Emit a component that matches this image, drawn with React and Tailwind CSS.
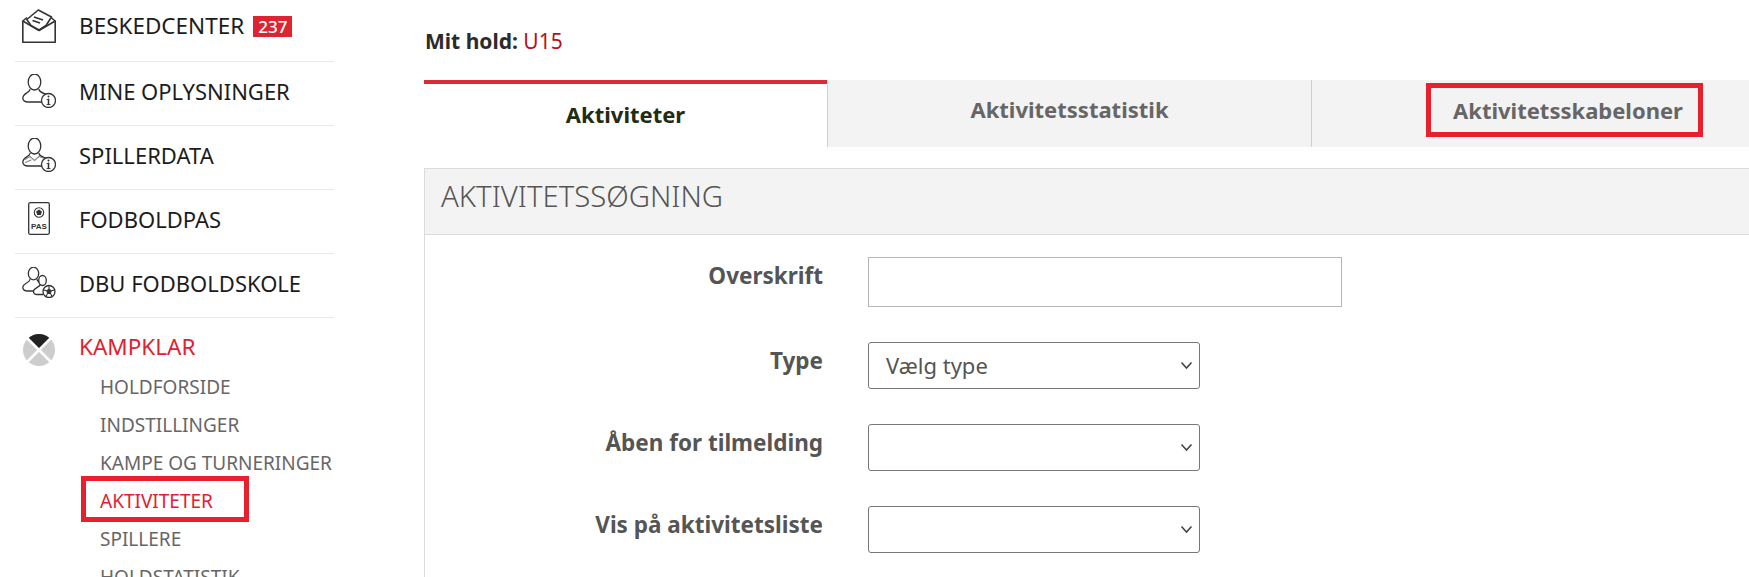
const font = "font-['Noto_Sans','Open_Sans',sans-serif]";

function MailIcon() {
  return (
    <svg width="34" height="34" viewBox="0 0 34 34" fill="none" stroke="#333" strokeWidth="1.6" strokeLinejoin="round">
      <path d="M5 8.5 L0.8 12 V33.2 H33.2 V12 L29 8.5" />
      <path d="M0.8 12 L17 21.5 L33.2 12" />
      <path d="M4.8 10.5 L16.3 1 L29.5 8 L24 16.5 L17 21 L9 16.5 Z" fill="#fff" />
      <path d="M12 8 L21 11 M10.5 11.5 L18 14" strokeWidth="1.8" />
    </svg>
  );
}

function InfoBadge() {
  return (
    <g>
      <circle cx="26.5" cy="26.5" r="7" fill="#fff" stroke="#333" strokeWidth="1.3" />
      <path d="M26.5 25.2 V30.5" stroke="#333" strokeWidth="1.5" />
      <path d="M25 25.5 H26.5 M25 30.5 H28" stroke="#333" strokeWidth="0.9" />
      <circle cx="26.5" cy="22.6" r="1" fill="#333" stroke="none" />
    </g>
  );
}

function UserIcon() {
  return (
    <svg width="34" height="34" viewBox="0 0 34 34" fill="none" stroke="#333" strokeWidth="1.3" strokeLinecap="round">
      <ellipse cx="12.5" cy="8" rx="6.3" ry="8" />
      <path d="M8 15.5 C7.5 19 1 19 0.8 24 C0.7 27 3.5 28 6 28 H20" />
      <path d="M17 15.5 C17.5 18 20.5 19 23.5 20" />
      <InfoBadge />
    </svg>
  );
}

function PlayerIcon() {
  return (
    <svg width="34" height="34" viewBox="0 0 34 34" fill="none" stroke="#333" strokeWidth="1.3" strokeLinecap="round">
      <ellipse cx="12.5" cy="8" rx="6.3" ry="8" />
      <path d="M8 15.5 C7.5 19 1 19 0.8 24 C0.7 27 3.5 28 6 28 H20" />
      <path d="M17 15.5 C17.5 18 20.5 19 23.5 20" />
      <path d="M3 21.5 L8 18.5 L12.5 22.5 L17 18.5 L21 20 M3.5 24.5 L9 22" strokeWidth="1.1" stroke="#888" />
      <InfoBadge />
    </svg>
  );
}

function PassIcon() {
  return (
    <svg width="22" height="33" viewBox="0 0 22 33" fill="none">
      <rect x="0.7" y="0.7" width="20.6" height="31.6" rx="1.5" stroke="#333" strokeWidth="1.3" />
      <circle cx="11" cy="10.5" r="4.7" stroke="#333" strokeWidth="1.1" />
      <path d="M11 7.4 L13.9 9.6 L12.8 13 H9.2 L8.1 9.6 Z" fill="#333" />
      <text x="11" y="26.5" textAnchor="middle" fontSize="8" fontWeight="700" fill="#333" fontFamily="Liberation Sans, sans-serif">PAS</text>
    </svg>
  );
}

function SchoolIcon() {
  return (
    <svg width="34" height="31" viewBox="0 0 34 31" fill="none" stroke="#333" strokeWidth="1.3" strokeLinecap="round">
      <ellipse cx="11.5" cy="6.5" rx="5.2" ry="6.3" />
      <path d="M8 12.5 C7.5 16 1.5 16 0.8 20 C0.6 23 3 24 5.5 24 H11.5" />
      <path d="M15 12.5 C15.5 14 16 14.5 17 15" />
      <ellipse cx="20.5" cy="13.5" rx="3.8" ry="5" />
      <path d="M18 18 C17.5 20 12 21 11.5 24 C11.3 26.5 13 27.5 15 27.5 H21" />
      <circle cx="27" cy="24.5" r="6" fill="#fff" strokeWidth="1.3" />
      <path d="M27 21.5 L29.8 23.6 L28.8 27 H25.2 L24.2 23.6 Z" fill="#333" stroke="none" />
      <path d="M27 19 V21.5 M21.5 23 L24.2 23.6 M32.5 23 L29.8 23.6 M24 29.5 L25.2 27 M30 29.5 L28.8 27" strokeWidth="1.1" />
    </svg>
  );
}

function KampklarIcon() {
  return (
    <svg width="32" height="32" viewBox="0 0 32 32">
      <circle cx="16" cy="16" r="16" fill="#cdcdcd" />
      <path d="M16 16 L4.7 4.7 A16 16 0 0 1 27.3 4.7 Z" fill="#222" />
      <path d="M3 3 L29 29 M29 3 L3 29" stroke="#fff" strokeWidth="2.6" />
    </svg>
  );
}

const menu = [
  { label: 'BESKEDCENTER', icon: <MailIcon />, badge: '237', first: true },
  { label: 'MINE OPLYSNINGER', icon: <UserIcon /> },
  { label: 'SPILLERDATA', icon: <PlayerIcon /> },
  { label: 'FODBOLDPAS', icon: <PassIcon /> },
  { label: 'DBU FODBOLDSKOLE', icon: <SchoolIcon /> },
];

const subItems = ['HOLDFORSIDE', 'INDSTILLINGER', 'KAMPE OG TURNERINGER', 'AKTIVITETER', 'SPILLERE', 'HOLDSTATISTIK'];

function Sidebar() {
  return (
    <aside className="w-[319px] ml-[15px] mr-[90px] flex-none">
      {menu.map((item) => (
        <div
          key={item.label}
          className={`flex items-center border-b border-[#e8e8e8] ${item.first ? 'h-[62px] pb-[9px]' : 'h-16 pb-[6px]'}`}
        >
          <div className="w-[64px] flex-none flex justify-start pl-[7px]">
            <div className="w-[34px] flex justify-center">{item.icon}</div>
          </div>
          <span className={`leading-7 text-[#1c1c1c] ${item.first ? 'text-[22.5px]' : 'text-[22px]'}`}>{item.label}</span>
          {item.badge && (
            <span className="ml-[9px] bg-[#dc2531] text-white text-[17px] leading-[21px] px-[5px] font-medium">{item.badge}</span>
          )}
        </div>
      ))}
      <div className="flex items-center h-[50px] pt-[7px]">
        <div className="w-[64px] flex-none pl-[8px] pt-[7px]">
          <KampklarIcon />
        </div>
        <span className="text-[22.5px] leading-7 text-[#e3202f]">KAMPKLAR</span>
      </div>
      <ul className="pl-[85px]">
        {subItems.map((s) => (
          <li key={s} className={`h-[38px] flex items-center text-[19px] whitespace-nowrap ${s === 'AKTIVITETER' ? 'text-[#e3202f]' : 'text-[#666]'}`}>
            {s}
          </li>
        ))}
      </ul>
    </aside>
  );
}

function Row({ label, children }) {
  return (
    <div className="flex items-start">
      <label className="w-[398px] flex-none text-right pt-[5px] text-[22.5px] leading-7 font-bold text-[#555]">{label}</label>
      <div className="ml-[45px]">{children}</div>
    </div>
  );
}

function Select({ value }) {
  return (
    <div className="relative w-[332px]">
      <select className="appearance-none w-full h-[47px] block bg-white border border-[#767676] rounded-[3px] pl-[17px] pr-6 text-[22px] text-[#555]" defaultValue={value}>
        <option>{value}</option>
      </select>
      <svg className="absolute right-[7px] top-[19px]" width="13" height="9" viewBox="0 0 13 9" fill="none" stroke="#444" strokeWidth="1.6">
        <path d="M1.5 1.5 L6.5 7 L11.5 1.5" />
      </svg>
    </div>
  );
}

export default function App() {
  return (
    <div className={`relative h-[577px] w-[1749px] overflow-hidden bg-white flex ${font}`}>
      <Sidebar />
      <main className="flex-1 min-w-0 overflow-hidden flex flex-col">
        <p className="h-[80px] flex-none pt-[27px] pl-px text-[21px] leading-7 font-bold text-[#2b2b2b]">
          Mit hold: <span className="font-normal text-[#b5121b]">U15</span>
        </p>

        <div className="flex flex-none w-[1400px] h-[67px] text-[22px] font-bold">
          <div className="w-[403px] flex-none border-t-4 border-[#d92b3a] flex items-center justify-center text-[#232b12] pb-[3px]">Aktiviteter</div>
          <div className="w-[484px] flex-none bg-[#f3f3f3] border-l border-[#cfcfcf] flex items-center justify-center text-[#666] pb-[8px]">Aktivitetsstatistik</div>
          <div className="w-[513px] flex-none bg-[#f3f3f3] border-l border-[#cfcfcf] flex items-center justify-center text-[#666] pb-[7px]">Aktivitetsskabeloner</div>
        </div>

        <section className="mt-[21px] flex-1 border-l border-[#dcdcdc]">
          <h2 className="h-[67px] bg-[#f3f3f3] border-y border-[#dcdcdc] pl-4 pb-[10px] flex items-center text-[29.3px] font-light text-[#555]">AKTIVITETSSØGNING</h2>
          <div className="pt-[22px] flex flex-col gap-[35px]">
            <Row label="Overskrift">
              <input className="w-[474px] h-[50px] block border border-[#b5b5b5] bg-white" />
            </Row>
            <Row label="Type">
              <Select value="Vælg type" />
            </Row>
            <Row label="Åben for tilmelding">
              <Select value="" />
            </Row>
            <Row label="Vis på aktivitetsliste">
              <Select value="" />
            </Row>
          </div>
        </section>
      </main>

      {/* annotation boxes from the guide */}
      <div className="absolute left-[81px] top-[476px] w-[168px] h-[46px] border-[5px] border-[#e81f2c]" />
      <div className="absolute left-[1426px] top-[83px] w-[277px] h-[54px] border-[5px] border-[#e81f2c]" />
    </div>
  );
}
